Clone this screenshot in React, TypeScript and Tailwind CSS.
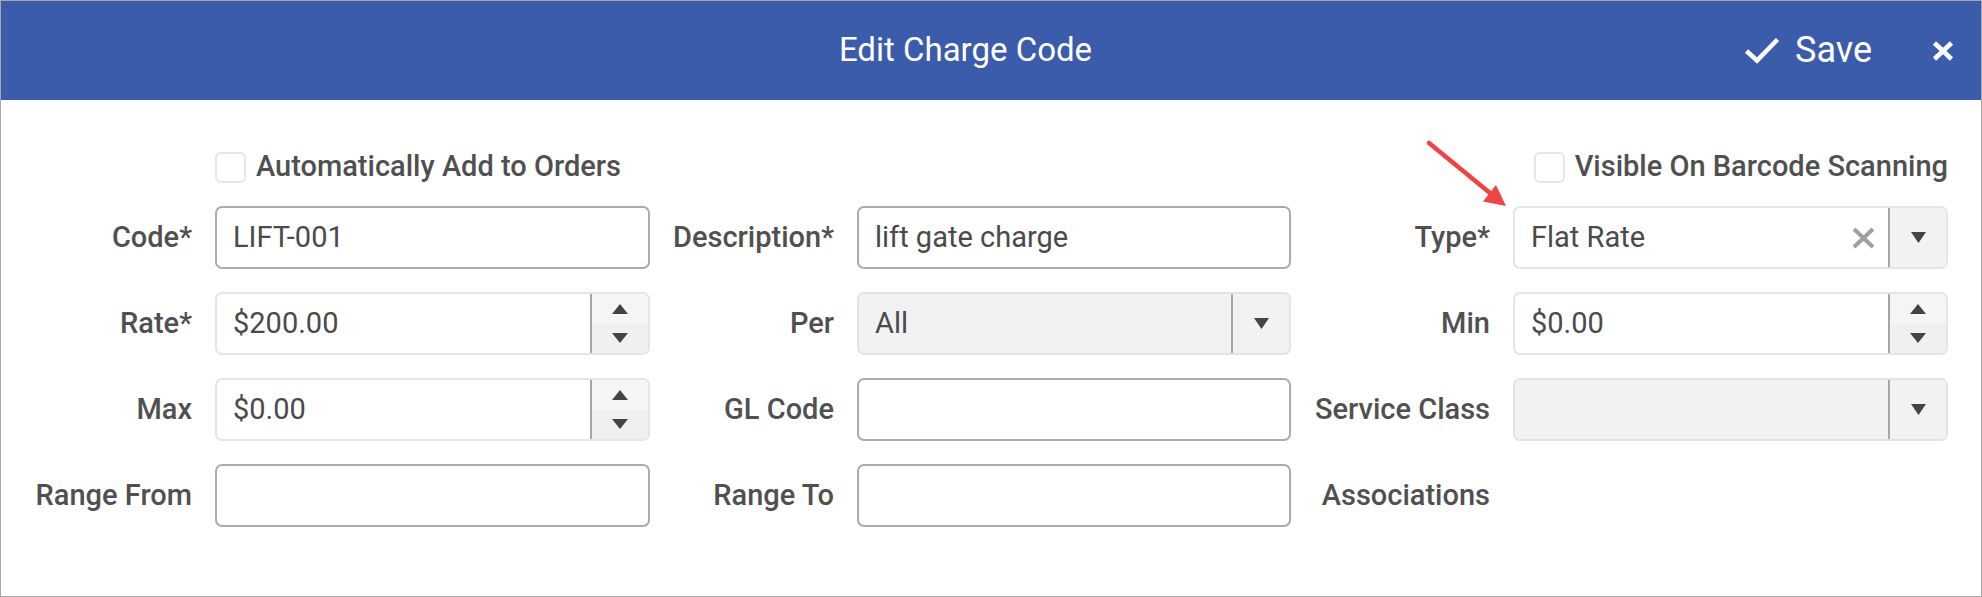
import type { FC, ReactNode } from 'react'

const Tri: FC<{ up?: boolean }> = ({ up = false }) => (
  <svg width="16" height="10" viewBox="0 0 16 10">
    <polygon points={up ? '0,10 16,10 8,0' : '0,0 16,0 8,10'} fill="#444" />
  </svg>
)

const Label: FC<{ children: ReactNode }> = ({ children }) => (
  <div className="flex items-center justify-end whitespace-nowrap text-[29px] font-medium text-[#505050]">
    {children}
  </div>
)

const TextField: FC<{ value?: string }> = ({ value = '' }) => (
  <div className="flex h-full items-center rounded-[7px] border-2 border-[#ababab] bg-white px-[16px]">
    <input
      readOnly
      defaultValue={value}
      className="w-full bg-transparent text-[29px] text-[#4a4a4a] outline-none"
    />
  </div>
)

const NumberField: FC<{ value: string }> = ({ value }) => (
  <div className="flex h-full overflow-hidden rounded-[7px] border-2 border-[#e5e5e5] bg-white">
    <div className="flex flex-1 items-center px-[16px] text-[29px] text-[#4a4a4a]">
      {value}
    </div>
    <div className="flex w-[58px] flex-col border-l-2 border-[#a6a6a6]">
      <div className="flex flex-1 items-center justify-center bg-[#f5f5f5]">
        <Tri up />
      </div>
      <div className="flex flex-1 items-center justify-center bg-[#f0f0f0]">
        <Tri />
      </div>
    </div>
  </div>
)

const SelectField: FC<{ value?: string; disabled?: boolean; clearable?: boolean }> = ({
  value = '',
  disabled = false,
  clearable = false,
}) => (
  <div
    className={
      disabled
        ? 'flex h-full overflow-hidden rounded-[7px] border-2 border-[#e3e3e3] bg-[#f2f2f2]'
        : 'flex h-full overflow-hidden rounded-[7px] border-2 border-[#e5e5e5] bg-white'
    }
  >
    <div className="flex flex-1 items-center px-[16px] text-[29px] text-[#4a4a4a]">
      {value}
    </div>
    {clearable && (
      <div className="flex items-center pr-[13px]">
        <svg width="23" height="22" viewBox="0 0 23 22">
          <path d="M2 2 L21 20 M21 2 L2 20" stroke="#a0a0a0" strokeWidth="4" />
        </svg>
      </div>
    )}
    <div className="flex w-[58px] items-center justify-center border-l-2 border-[#a6a6a6] bg-[#f2f2f2]">
      <svg width="15" height="11" viewBox="0 0 15 11">
        <polygon points="0,0 15,0 7.5,11" fill="#444" />
      </svg>
    </div>
  </div>
)

const Checkbox: FC<{ text: string }> = ({ text }) => (
  <div className="flex items-center gap-[10px]">
    <span className="h-[31px] w-[31px] rounded-[6px] border-2 border-[#e6e6e6] bg-white" />
    <span className="whitespace-nowrap text-[29px] font-medium text-[#505050]">{text}</span>
  </div>
)

export default function App() {
  return (
    <div className="relative h-[597px] w-[1982px] border border-[#a8a8a8] bg-white font-['Roboto',sans-serif]">
      {/* Header */}
      <div className="flex h-[99px] items-center bg-[#3b5bab] text-white">
        <div className="flex flex-1 justify-center pl-[186px] pb-[2px] text-[33px]">
          Edit Charge Code
        </div>
        <div className="flex items-center pr-[27px]">
          <svg width="36" height="28" viewBox="0 0 36 28">
            <path d="M2.5 14 L13 23.5 L33.5 2.5" fill="none" stroke="white" strokeWidth="4.6" />
          </svg>
          <span className="ml-[15px] pb-[2px] text-[36px]">Save</span>
          <svg className="ml-[60px]" width="22" height="20" viewBox="0 0 22 20">
            <path d="M2.5 2 L19.5 18 M19.5 2 L2.5 18" stroke="white" strokeWidth="4.6" />
          </svg>
        </div>
      </div>

      {/* Form */}
      <div className="grid grid-cols-[172px_435px_161px_434px_176px_435px] grid-rows-[32px_63px_63px_63px_63px] gap-x-[23px] gap-y-[23px] pl-[19px] pt-[51px]">
        <div />
        <Checkbox text="Automatically Add to Orders" />
        <div />
        <div />
        <div />
        <div className="flex justify-end">
          <Checkbox text="Visible On Barcode Scanning" />
        </div>

        <Label>Code*</Label>
        <TextField value="LIFT-001" />
        <Label>Description*</Label>
        <TextField value="lift gate charge" />
        <Label>Type*</Label>
        <SelectField value="Flat Rate" clearable />

        <Label>Rate*</Label>
        <NumberField value="$200.00" />
        <Label>Per</Label>
        <SelectField value="All" disabled />
        <Label>Min</Label>
        <NumberField value="$0.00" />

        <Label>Max</Label>
        <NumberField value="$0.00" />
        <Label>GL Code</Label>
        <TextField />
        <Label>Service Class</Label>
        <SelectField disabled />

        <Label>Range From</Label>
        <TextField />
        <Label>Range To</Label>
        <TextField />
        <Label>Associations</Label>
        <div />
      </div>

      {/* annotation arrow */}
      <svg
        className="absolute left-[1400px] top-[130px]"
        width="120"
        height="90"
        viewBox="0 0 120 90"
      >
        <line x1="28" y1="12" x2="89" y2="62" stroke="#ef4444" strokeWidth="4.5" strokeLinecap="round" />
        <polygon points="82,70.5 95,54 105,75" fill="#ef4444" />
      </svg>
    </div>
  )
}
